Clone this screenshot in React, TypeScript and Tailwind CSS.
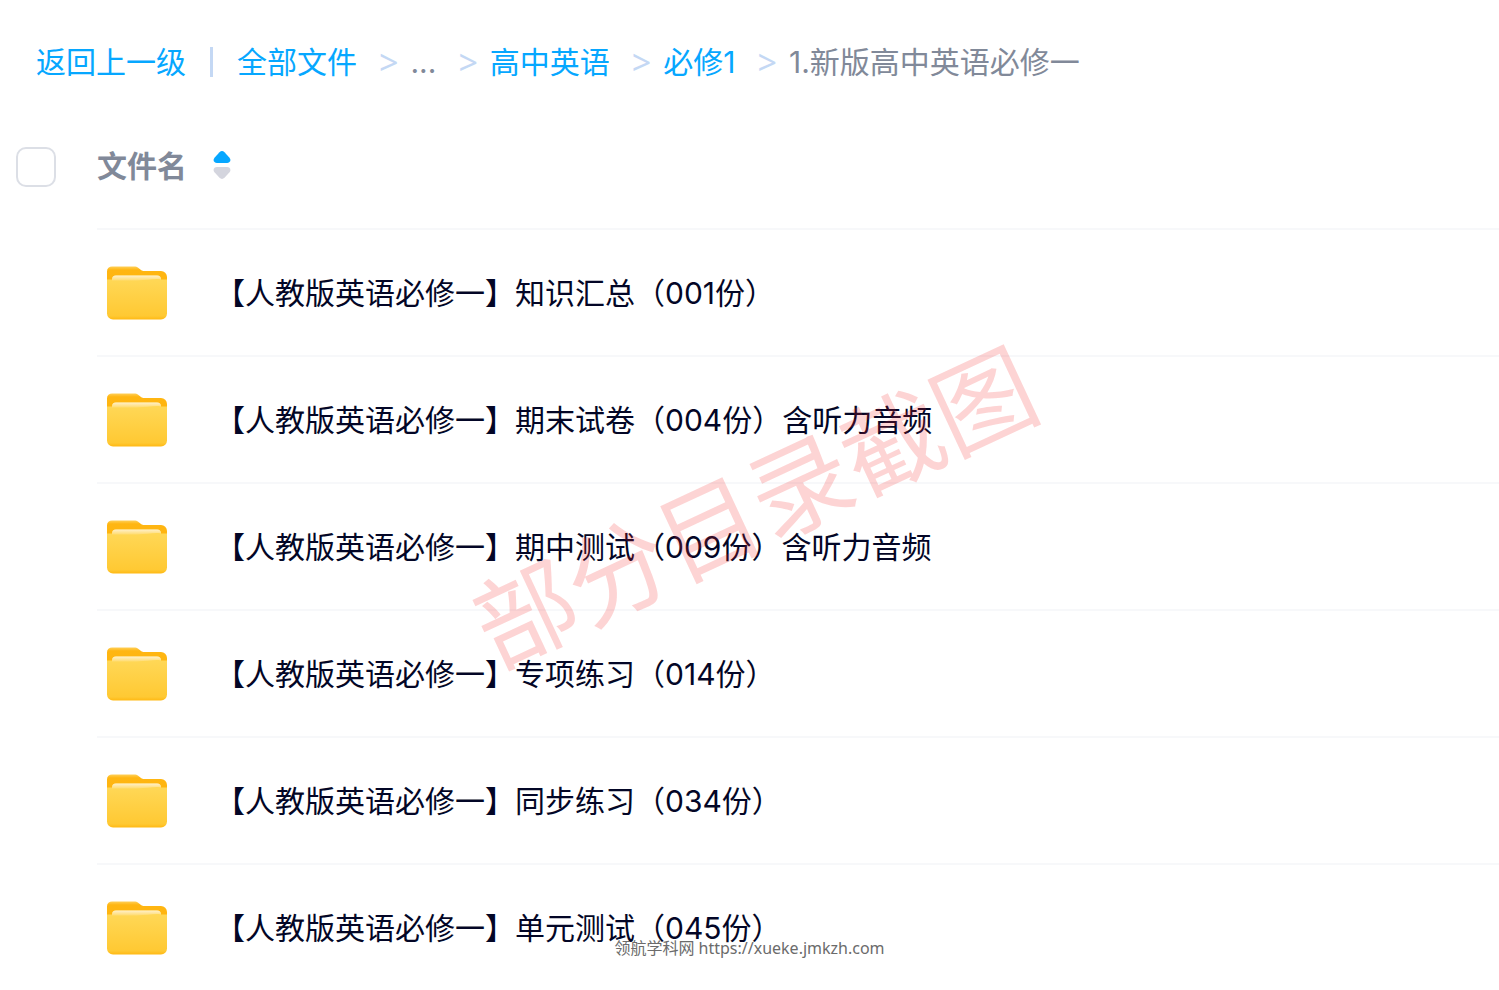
const crumbs = [
    { label: "全部文件", link: true },
    { label: "...", link: false },
    { label: "高中英语", link: true },
    { label: "必修1", link: true },
    { label: "1.新版高中英语必修一", link: false },
];

const folders = [
    "【人教版英语必修一】知识汇总（001份）",
    "【人教版英语必修一】期末试卷（004份）含听力音频",
    "【人教版英语必修一】期中测试（009份）含听力音频",
    "【人教版英语必修一】专项练习（014份）",
    "【人教版英语必修一】同步练习（034份）",
    "【人教版英语必修一】单元测试（045份）",
];

function FolderIcon() {
    return (
        <svg width="60" height="54" viewBox="0 0.6 60 54" className="shrink-0" aria-hidden="true">
            <defs>
                <linearGradient id="folder-front" x1="0" y1="0" x2="0" y2="1">
                    <stop offset="0" stopColor="#ffd95a" />
                    <stop offset="0.92" stopColor="#ffc933" />
                    <stop offset="1" stopColor="#ffb914" />
                </linearGradient>
                <linearGradient id="folder-paper" x1="0" y1="0" x2="0" y2="1">
                    <stop offset="0" stopColor="#fff0cc" />
                    <stop offset="1" stopColor="#ffdc70" />
                </linearGradient>
                <linearGradient id="folder-back" x1="0" y1="0" x2="0" y2="1">
                    <stop offset="0" stopColor="#ffd05a" />
                    <stop offset="0.12" stopColor="#ffb612" />
                    <stop offset="1" stopColor="#ffb30c" />
                </linearGradient>
            </defs>
            <path d="M0 6a5 5 0 0 1 5-5h22c2 0 3 .4 4.500 1.500l2.500 2c1 .8 2 1 3.500 1H54a6 6 0 0 1 6 6V30H0z" fill="url(#folder-back)" />
            <path d="M0 14h5a4 4 0 0 1 4-4h41a4 4 0 0 1 4 4h6v34a6 6 0 0 1-6 6H6a6 6 0 0 1-6-6z" fill="url(#folder-front)" />
            <path d="M5 15v-1a4 4 0 0 1 4-4h41a4 4 0 0 1 4 4c-7-1-14 1-24 1z" fill="url(#folder-paper)" />
        </svg>
    );
}

function SortIcon() {
    return (
        <svg width="18" height="30" viewBox="0 0 18 30" aria-hidden="true">
            <path d="M6.500 1.200q2.500-2.200 5 0l5 5.500c2 2.500.5 5.300-2.500 5.300h-10C1 12-.5 9.200 1.500 6.700z" fill="#06a7ff" />
            <path d="M6.500 26.800q2.500 2.200 5 0l5-5.500c2-2.500.5-5.300-2.500-5.300h-10C1 16-.5 18.800 1.500 21.300z" fill="#d4d5de" />
        </svg>
    );
}

export default function App() {
    return (
        <div className="relative min-h-screen w-full overflow-hidden bg-white font-[Inter,'Noto_Sans_CJK_SC',sans-serif] text-[30px] leading-[44px] text-[#030626]">
            {/* Breadcrumb */}
            <nav className="flex items-center whitespace-nowrap px-9 pt-10 text-[#818999]">
                <a href="#" className="text-[#06a7ff]">返回上一级</a>
                <span className="mx-6 h-[30px] w-[3px] bg-[#c4d8f4]" />
                {crumbs.map((crumb, i) => (
                    <span key={crumb.label} className="flex items-center">
                        {i > 0 && <span className="ml-[22px] mr-3 font-['Noto_Sans',sans-serif] text-[34px] text-[#c4d8f4]">&gt;</span>}
                        {crumb.link ? <a href="#" className="text-[#06a7ff]">{crumb.label}</a> : <span>{crumb.label}</span>}
                    </span>
                ))}
            </nav>

            {/* File list */}
            <table className="mt-5 w-full border-collapse text-left">
                <thead>
                    <tr className="h-[125px]">
                        <th className="w-[97px] pl-4">
                            <input type="checkbox" aria-label="全选" className="block size-10 appearance-none rounded-[10px] border-2 border-[#dcdfe6] bg-white" />
                        </th>
                        <th className="font-bold text-[#818999]">
                            <button type="button" className="flex items-center gap-[26px]">
                                文件名
                                <SortIcon />
                            </button>
                        </th>
                    </tr>
                </thead>
                <tbody>
                    {folders.map((name) => (
                        <tr key={name} className="h-[127px]">
                            <td />
                            <td className="border-t-2 border-[#f7f8fa] pl-[10px]">
                                <a href="#" className="flex items-center gap-12 whitespace-nowrap">
                                    <FolderIcon />
                                    {name}
                                </a>
                            </td>
                        </tr>
                    ))}
                </tbody>
            </table>

            {/* Watermarks */}
            <div className="pointer-events-none absolute left-[452px] top-[434px] -rotate-[25deg] whitespace-nowrap text-[101px] leading-[148px] text-[#f42a2a]/20">
                部分目录截图
            </div>
            <div className="pointer-events-none absolute inset-x-0 top-[936px] text-center font-['Noto_Sans','Noto_Sans_CJK_SC',sans-serif] text-base text-[#6b6b6b]">
                领航学科网 https://xueke.jmkzh.com
            </div>
        </div>
    );
}
